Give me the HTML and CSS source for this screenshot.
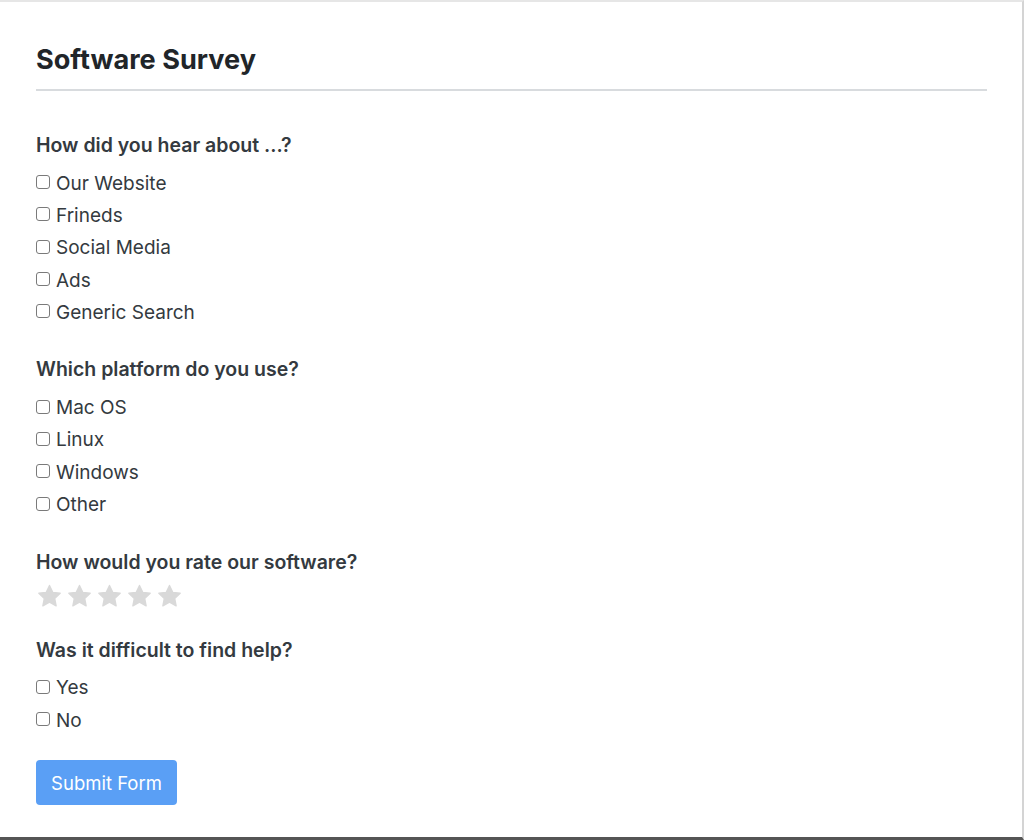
FILE: index.html
```html
<!DOCTYPE html>
<html>
<head>
<meta charset="utf-8">
<link rel="stylesheet" href="styles.css">
</head>
<body>
<div class="page">
  <h1 class="title">Software Survey</h1>
  <hr class="rule">
  <form class="survey">
    <fieldset class="group">
      <div class="question">How did you hear about ...?</div>
      <label class="option"><input type="checkbox" class="box"><span>Our Website</span></label>
      <label class="option"><input type="checkbox" class="box"><span>Frineds</span></label>
      <label class="option"><input type="checkbox" class="box"><span>Social Media</span></label>
      <label class="option"><input type="checkbox" class="box"><span>Ads</span></label>
      <label class="option"><input type="checkbox" class="box"><span>Generic Search</span></label>
    </fieldset>
    <fieldset class="group">
      <div class="question">Which platform do you use?</div>
      <label class="option"><input type="checkbox" class="box"><span>Mac OS</span></label>
      <label class="option"><input type="checkbox" class="box"><span>Linux</span></label>
      <label class="option"><input type="checkbox" class="box"><span>Windows</span></label>
      <label class="option"><input type="checkbox" class="box"><span>Other</span></label>
    </fieldset>
    <fieldset class="group">
      <div class="question q-rate">How would you rate our software?</div>
      <div class="stars">
        <svg class="star" viewBox="0 0 24 24"><path d="M12 2.2l2.9 6.1 6.6.8-4.9 4.6 1.3 6.6L12 17l-5.9 3.3 1.3-6.6-4.9-4.6 6.6-.8z"/></svg>
        <svg class="star" viewBox="0 0 24 24"><path d="M12 2.2l2.9 6.1 6.6.8-4.9 4.6 1.3 6.6L12 17l-5.9 3.3 1.3-6.6-4.9-4.6 6.6-.8z"/></svg>
        <svg class="star" viewBox="0 0 24 24"><path d="M12 2.2l2.9 6.1 6.6.8-4.9 4.6 1.3 6.6L12 17l-5.9 3.3 1.3-6.6-4.9-4.6 6.6-.8z"/></svg>
        <svg class="star" viewBox="0 0 24 24"><path d="M12 2.2l2.9 6.1 6.6.8-4.9 4.6 1.3 6.6L12 17l-5.9 3.3 1.3-6.6-4.9-4.6 6.6-.8z"/></svg>
        <svg class="star" viewBox="0 0 24 24"><path d="M12 2.2l2.9 6.1 6.6.8-4.9 4.6 1.3 6.6L12 17l-5.9 3.3 1.3-6.6-4.9-4.6 6.6-.8z"/></svg>
      </div>
    </fieldset>
    <fieldset class="group">
      <div class="question">Was it difficult to find help?</div>
      <label class="option"><input type="checkbox" class="box"><span>Yes</span></label>
      <label class="option"><input type="checkbox" class="box"><span>No</span></label>
    </fieldset>
    <button type="button" class="submit">Submit Form</button>
  </form>
</div>
</body>
</html>
```
FILE: styles.css
```css
html, body {
  margin: 0;
  padding: 0;
  background: #ffffff;
}
.page {
  box-sizing: border-box;
  width: 1024px;
  height: 840px;
  border-top: 2px solid #e6e6e6;
  border-right: 2px solid #d4d4d4;
  border-bottom: 3px solid #555555;
  padding: 42px 35px 0 36px;
  font-family: Inter, "Noto Sans", "Liberation Sans", sans-serif;
  color: #343a40;
}
.title {
  margin: 0;
  font-size: 27.1px;
  line-height: 32px;
  font-weight: 700;
  color: #212529;
}
.rule {
  margin: 13px 0 0 0;
  border: 0;
  height: 2px;
  background: #d8dbde;
}
.survey {
  margin: 0;
}
.group {
  border: 0;
  margin: 0;
  padding: 0;
  display: flex;
  flex-direction: column;
  align-items: flex-start;
}
.group:first-child {
  margin-top: 40px;
}
.group + .group {
  margin-top: 27px;
}
.group:last-of-type {
  margin-top: 24px;
}
.question {
  font-size: 19.5px;
  font-weight: 600;
  line-height: 28px;
  color: #343a40;
  margin-bottom: 8px;
}
.q-rate {
  margin-bottom: 6px;
}
.option {
  display: flex;
  align-items: center;
  height: 32.3px;
  font-size: 19px;
  color: #343a40;
}
.box {
  appearance: none;
  -webkit-appearance: none;
  box-sizing: border-box;
  width: 14px;
  height: 14px;
  margin: -2px 6px 0 0;
  border: 1px solid #7a7a7a;
  border-radius: 3px;
  background: #ffffff;
}
.stars {
  display: flex;
  gap: 3px;
  height: 30px;
  align-items: center;
}
.star {
  width: 27px;
  height: 27px;
  fill: #d9d9d9;
  stroke: #d9d9d9;
  stroke-width: 1.2;
  stroke-linejoin: round;
}
.submit {
  margin-top: 24px;
  width: 141px;
  height: 45px;
  border: 0;
  border-radius: 4px;
  background: #5a9ff5;
  color: #ffffff;
  font-family: Inter, "Noto Sans", "Liberation Sans", sans-serif;
  font-size: 18.5px;
  padding: 0;
}
```
